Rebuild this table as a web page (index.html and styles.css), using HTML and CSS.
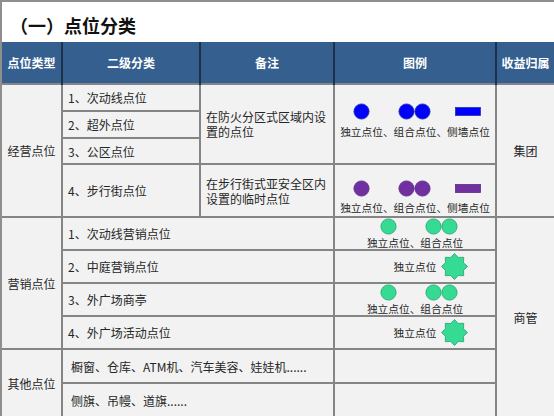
FILE: index.html
```html
<!DOCTYPE html>
<html lang="zh-CN">
<head>
<meta charset="utf-8">
<title>点位分类</title>
<link rel="stylesheet" href="styles.css">
</head>
<body>
<div class="frame">
  <h1 class="title">（一）点位分类</h1>
  <table class="grid">
    <colgroup><col class="c1"><col class="c2"><col class="c3"><col class="c4"><col class="c5"></colgroup>
    <thead>
      <tr class="h"><th class="first">点位类型</th><th>二级分类</th><th>备注</th><th>图例</th><th class="last">收益归属</th></tr>
    </thead>
    <tbody>
      <tr class="r1">
        <td rowspan="4" class="cat first">经营点位</td>
        <td class="sub">1、次动线点位</td>
        <td rowspan="3" class="note">在防火分区式区域内设置的点位</td>
        <td rowspan="3" class="leg">
          <div class="lg blue">
            <span class="ic"><svg width="17" height="17" viewBox="0 0 17 17"><circle cx="8.5" cy="8.5" r="7.6"/></svg></span><span></span>
            <span class="ic"><svg width="34" height="17" viewBox="0 0 34 17"><circle cx="8.5" cy="8.5" r="7.6"/><circle cx="24.5" cy="8.5" r="7.6"/></svg></span><span></span>
            <span class="ic"><svg width="26" height="9" viewBox="0 0 26 9"><rect x="0.5" y="0.5" width="25" height="8"/></svg></span>
            <span>独立点位</span><span>、</span><span>组合点位</span><span>、</span><span>侧墙点位</span>
          </div>
        </td>
        <td rowspan="4" class="own last">集团</td>
      </tr>
      <tr class="r2"><td class="sub">2、超外点位</td></tr>
      <tr class="r3"><td class="sub">3、公区点位</td></tr>
      <tr class="r4">
        <td class="sub">4、步行街点位</td>
        <td class="note">在步行街式亚安全区内设置的临时点位</td>
        <td class="leg">
          <div class="lg purple">
            <span class="ic"><svg width="17" height="17" viewBox="0 0 17 17"><circle cx="8.5" cy="8.5" r="7.6"/></svg></span><span></span>
            <span class="ic"><svg width="34" height="17" viewBox="0 0 34 17"><circle cx="8.5" cy="8.5" r="7.6"/><circle cx="24.5" cy="8.5" r="7.6"/></svg></span><span></span>
            <span class="ic"><svg width="26" height="9" viewBox="0 0 26 9"><rect x="0.5" y="0.5" width="25" height="8"/></svg></span>
            <span>独立点位</span><span>、</span><span>组合点位</span><span>、</span><span>侧墙点位</span>
          </div>
        </td>
      </tr>
      <tr class="m">
        <td rowspan="4" class="cat first">营销点位</td>
        <td colspan="2" class="sub">1、次动线营销点位</td>
        <td class="leg">
          <div class="lg green pair">
            <span class="ic"><svg width="17" height="17" viewBox="0 0 17 17"><circle cx="8.5" cy="8.5" r="7.6"/></svg></span><span></span>
            <span class="ic"><svg width="34" height="17" viewBox="0 0 34 17"><circle cx="8.5" cy="8.5" r="7.6"/><circle cx="24.5" cy="8.5" r="7.6"/></svg></span>
            <span>独立点位</span><span>、</span><span>组合点位</span>
          </div>
        </td>
        <td rowspan="6" class="own last">商管</td>
      </tr>
      <tr class="m">
        <td colspan="2" class="sub">2、中庭营销点位</td>
        <td class="leg mid">
          <div class="st green">
            <span class="st-t">独立点位</span>
            <svg class="star" width="27" height="27" viewBox="0 0 27 27"><polygon points="13.5,0.5 17.25,4.45 22.69,4.31 22.55,9.75 26.5,13.5 22.55,17.25 22.69,22.69 17.25,22.55 13.5,26.5 9.75,22.55 4.31,22.69 4.45,17.25 0.5,13.5 4.45,9.75 4.31,4.31 9.75,4.45"/></svg>
          </div>
        </td>
      </tr>
      <tr class="m">
        <td colspan="2" class="sub">3、外广场商亭</td>
        <td class="leg">
          <div class="lg green pair">
            <span class="ic"><svg width="17" height="17" viewBox="0 0 17 17"><circle cx="8.5" cy="8.5" r="7.6"/></svg></span><span></span>
            <span class="ic"><svg width="34" height="17" viewBox="0 0 34 17"><circle cx="8.5" cy="8.5" r="7.6"/><circle cx="24.5" cy="8.5" r="7.6"/></svg></span>
            <span>独立点位</span><span>、</span><span>组合点位</span>
          </div>
        </td>
      </tr>
      <tr class="m">
        <td colspan="2" class="sub">4、外广场活动点位</td>
        <td class="leg mid">
          <div class="st green">
            <span class="st-t">独立点位</span>
            <svg class="star" width="27" height="27" viewBox="0 0 27 27"><polygon points="13.5,0.5 17.25,4.45 22.69,4.31 22.55,9.75 26.5,13.5 22.55,17.25 22.69,22.69 17.25,22.55 13.5,26.5 9.75,22.55 4.31,22.69 4.45,17.25 0.5,13.5 4.45,9.75 4.31,4.31 9.75,4.45"/></svg>
          </div>
        </td>
      </tr>
      <tr class="o">
        <td rowspan="2" class="cat first">其他点位</td>
        <td colspan="2" class="sub other">橱窗、仓库、ATM机、汽车美容、娃娃机......</td>
        <td class="leg"></td>
      </tr>
      <tr class="o">
        <td colspan="2" class="sub other">侧旗、吊幔、道旗......</td>
        <td class="leg"></td>
      </tr>
    </tbody>
  </table>
</div>
</body>
</html>
```

FILE: styles.css
```css
html, body {
  margin: 0;
  padding: 0;
  background: #ffffff;
  overflow: hidden;
}
body {
  width: 554px;
  height: 416px;
  font-family: "Noto Sans CJK SC", "Noto Sans", sans-serif;
  color: #262626;
}
.frame {
  box-sizing: border-box;
  height: 416px;
  border-top: 2px solid #8e8e8e;
  border-left: 2px solid #8e8e8e;
  background: #ffffff;
}
.title {
  margin: 0;
  box-sizing: border-box;
  height: 40px;
  padding: 6px 0 0 8px;
  display: flex;
  align-items: center;
  font-size: 18px;
  font-weight: 700;
  line-height: 1;
  color: #111111;
}
.grid {
  border-collapse: collapse;
  table-layout: fixed;
  width: 552px;
  background: #f2f2f2;
  font-size: 12px;
  line-height: 15px;
}
.c1 { width: 60px; }
.c2 { width: 138px; }
.c3 { width: 134px; }
.c4 { width: 162px; }
.c5 { width: 58px; }

.grid th {
  background: #355f8f;
  color: #ffffff;
  font-weight: 700;
  font-size: 12px;
  text-align: center;
  padding: 0;
  height: 41px;
  border-left: 2px solid #1d314a;
  border-right: 2px solid #1d314a;
  border-top: none;
  border-bottom: 1px solid #2b4768;
}
.grid td {
  border: 2px solid #858585;
  padding: 0;
  vertical-align: middle;
}
.grid .first { border-left: none; }
.grid .last { border-right: none; }

.r1 { height: 27px; }
.r2 { height: 27px; }
.r3 { height: 26px; }
.r4 { height: 53px; }
.m { height: 33px; }
.o { height: 34px; }

.cat, .own {
  text-align: center;
}
.sub {
  padding-left: 5px !important;
  white-space: nowrap;
}
.sub.other {
  padding-left: 8px !important;
}
.note {
  padding: 0 4px 0 5px !important;
}
.leg {
  vertical-align: top !important;
}
.leg.mid {
  vertical-align: middle !important;
}

.lg {
  display: grid;
  grid-template-columns: repeat(5, auto);
  justify-content: center;
  align-items: center;
  font-size: 10.7px;
  line-height: 13px;
  color: #262626;
}
.lg.pair {
  grid-template-columns: repeat(3, auto);
  row-gap: 1px;
}
.lg .ic {
  display: flex;
  justify-content: center;
  line-height: 0;
}
.lg.blue {
  padding-top: 18px;
  row-gap: 5px;
}
.lg.purple {
  padding-top: 15px;
  row-gap: 4px;
}
.lg.blue svg * { fill: #0000ff; stroke: #2233aa; stroke-width: 0.8; }
.lg.purple svg * { fill: #7030a0; stroke: #5a2a88; stroke-width: 0.8; }
.green svg * { fill: #35db93; stroke: #2a9e70; stroke-width: 0.8; }

.st {
  display: grid;
  grid-template-columns: 1fr auto 1fr;
  align-items: center;
  font-size: 10.7px;
  line-height: 13px;
}
.st-t {
  grid-column: 2;
}
.star {
  grid-column: 3;
  justify-self: start;
  margin-left: 5px;
  display: block;
}
```
